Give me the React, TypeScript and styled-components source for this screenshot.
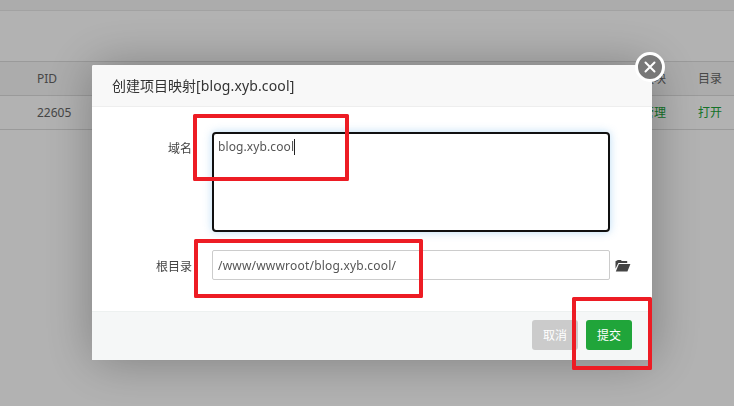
import React from "react";
import styled, { createGlobalStyle } from "styled-components";

const GlobalStyle = createGlobalStyle`
  *, *::before, *::after { box-sizing: border-box; }
  html, body { margin: 0; height: 100%; overflow: hidden; }
  body {
    background: #fff;
    color: #555;
    font: 12px/18px "Noto Sans", "Noto Sans CJK SC", sans-serif;
  }
`;

const Page = styled.div`
  height: 406px;
  display: flex;
  flex-direction: column;
`;

const TopBand = styled.div`
  height: 11px;
  background: #f6f6f6;
  border-bottom: 1px solid #e8e8e8;
`;

const Toolbar = styled.div`
  height: 50px;
`;

const Row = styled.div<{ $head?: boolean }>`
  display: grid;
  grid-template-columns: 605px 56px 1fr;
  align-items: center;
  height: ${(p) => (p.$head ? 35 : 34)}px;
  padding-left: 37px;
  background: ${(p) => (p.$head ? "#f6f6f6" : "#fff")};
  border-top: ${(p) => (p.$head ? "1px solid #ddd" : "0")};
  border-bottom: 1px solid #ddd;
`;

const Cell = styled.span<{ $link?: boolean }>`
  color: ${(p) => (p.$link ? "#20a53a" : "#666")};
  white-space: nowrap;
`;

const Overlay = styled.div`
  position: fixed;
  inset: 0;
  background: rgba(0, 0, 0, 0.3);
`;

const Dialog = styled.section`
  position: fixed;
  left: 92px;
  top: 65px;
  width: 560px;
  height: 295px;
  display: flex;
  flex-direction: column;
  background: #fff;
  border-radius: 2px 2px 0 0;
  box-shadow: 1px 1px 50px rgba(0, 0, 0, 0.3);
`;

const Title = styled.h1`
  margin: 0;
  height: 42px;
  padding-left: 20px;
  font-size: 14px;
  font-weight: 400;
  line-height: 42px;
  color: #333;
  background: #f8f8f8;
  border-bottom: 1px solid #eee;
  border-radius: 2px 2px 0 0;
`;

const Latin = styled.span<{ $track: number }>`
  letter-spacing: ${(p) => p.$track}px;
`;

const Form = styled.div`
  flex: 1;
  display: flex;
  flex-direction: column;
  gap: 18px;
  padding-top: 25px;
`;

const Field = styled.div`
  display: flex;
  align-items: flex-start;
`;

const Label = styled.label`
  width: 100px;
  margin-right: 20px;
  text-align: right;
  line-height: 33px;
  color: #444;
`;

const DomainBox = styled.div`
  width: 398px;
  height: 100px;
  padding: 3px 4px;
  line-height: 19px;
  border: 2px solid #101010;
  border-radius: 4px;
  box-shadow: 0 0 8px rgba(102, 175, 233, 0.45);
`;

const Caret = styled.span`
  display: inline-block;
  width: 1px;
  height: 16px;
  vertical-align: -4px;
  background: #222;
`;

const PathBox = styled.div`
  width: 398px;
  height: 30px;
  padding-left: 5px;
  line-height: 30px;
  border: 1px solid #ccc;
  border-radius: 2px;
`;

const FolderIcon = styled.svg`
  width: 16px;
  height: 12px;
  margin: 10px 0 0 5px;
  fill: #444;
`;

const Footer = styled.footer`
  height: 49px;
  display: flex;
  justify-content: flex-end;
  gap: 8px;
  padding: 8px 20px 0 0;
  background: #f5f7f7;
  border-top: 1px solid #edf1f0;
`;

const Button = styled.button<{ $primary?: boolean }>`
  width: 46px;
  height: 30px;
  padding: 1px 0 0;
  border: 0;
  border-radius: 3px;
  color: #fff;
  font: inherit;
  line-height: 30px;
  background: ${(p) => (p.$primary ? "#20a53a" : "#cbcbcb")};
`;

const Close = styled.button`
  position: absolute;
  top: -13px;
  right: -13px;
  width: 30px;
  height: 30px;
  padding: 0;
  border: 3px solid #fff;
  border-radius: 50%;
  background: #787878;
  svg { display: block; width: 24px; height: 24px; }
`;

const Highlight = styled.div<{ $x: number; $y: number; $w: number; $h: number }>`
  position: fixed;
  left: ${(p) => p.$x}px;
  top: ${(p) => p.$y}px;
  width: ${(p) => p.$w}px;
  height: ${(p) => p.$h}px;
  border: 4px solid #ed1c24;
  border-radius: 1.5px;
  pointer-events: none;
`;

export default function App() {
  return (
    <>
      <GlobalStyle />
      <Page>
        <TopBand />
        <Toolbar />
        <Row $head>
          <Cell>PID</Cell>
          <Cell>模块</Cell>
          <Cell>目录</Cell>
        </Row>
        <Row>
          <Cell>22605</Cell>
          <Cell $link>管理</Cell>
          <Cell $link>打开</Cell>
        </Row>
      </Page>
      <Overlay />
      <Dialog>
        <Title>
          创建项目映射<Latin $track={0.13}>[blog.xyb.cool]</Latin>
        </Title>
        <Form>
          <Field>
            <Label>域名</Label>
            <DomainBox>
              <Latin $track={0.1}>blog.xyb.cool</Latin>
              <Caret />
            </DomainBox>
          </Field>
          <Field>
            <Label>根目录</Label>
            <PathBox>
              <Latin $track={0.2}>/www/wwwroot/blog.xyb.cool/</Latin>
            </PathBox>
            <FolderIcon viewBox="0 0 16 12">
              <path d="M0.5 8.8V1.2L1.2 0.7H2L2.6 0H6L6.7 0.9H12.2V3H3.4Z" />
              <path d="M3.9 3.9H15.4L12.4 11.4H0.8Z" />
            </FolderIcon>
          </Field>
        </Form>
        <Footer>
          <Button>取消</Button>
          <Button $primary>提交</Button>
        </Footer>
        <Close aria-label="关闭">
          <svg viewBox="0 0 24 24" fill="none" stroke="#fff" strokeWidth="2" strokeLinecap="round">
            <path d="M7.5 7.5l9 9M16.5 7.5l-9 9" />
          </svg>
        </Close>
      </Dialog>
      <Highlight $x={193} $y={114} $w={156} $h={67} />
      <Highlight $x={194} $y={239} $w={229} $h={59} />
      <Highlight $x={572} $y={297} $w={80} $h={73} />
    </>
  );
}
